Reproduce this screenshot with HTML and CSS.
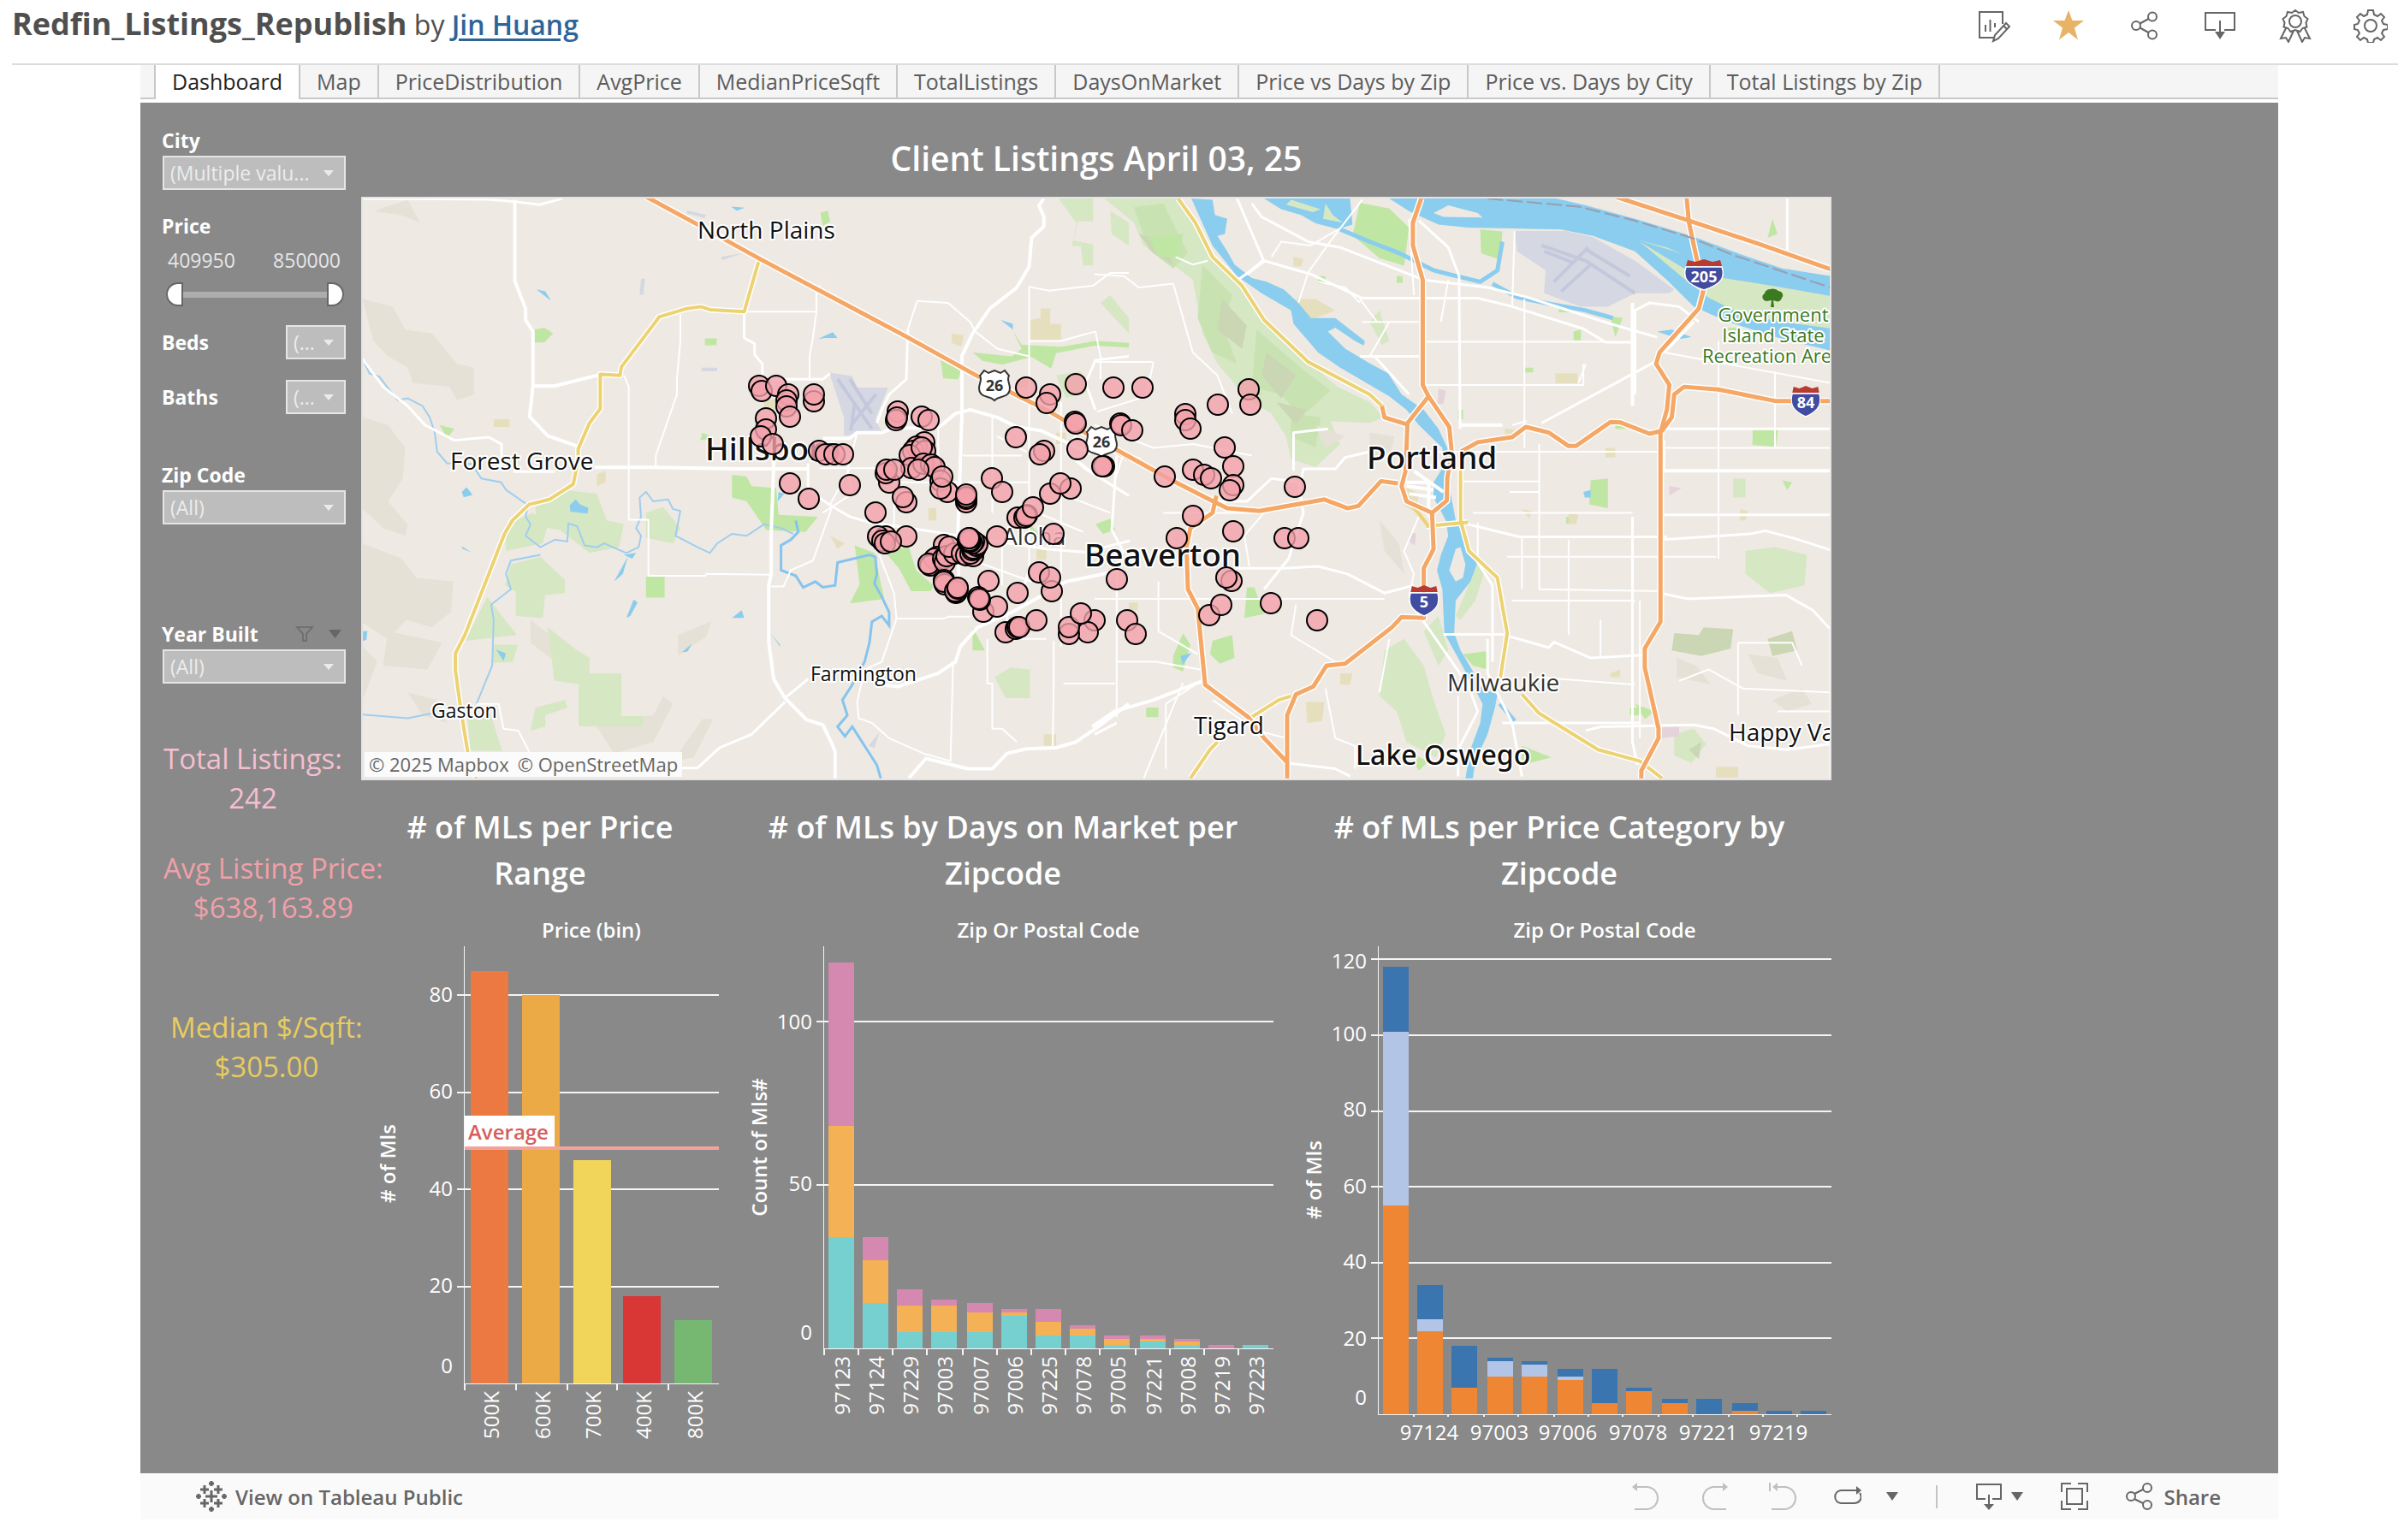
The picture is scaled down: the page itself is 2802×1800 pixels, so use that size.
FILE: index.html
```
<!DOCTYPE html>
<html lang="en">
<head>
<meta charset="utf-8">
<meta name="viewport" content="width=device-width, initial-scale=1">
<title>Redfin_Listings_Republish</title>
<link rel="stylesheet" href="styles.css">
</head>
<body>
<header class="topbar">
  <h1 class="viz-title"><strong>Redfin_Listings_Republish</strong> <span class="by">by</span> <a href="#author">Jin Huang</a></h1>
  <div class="actions">
    <button type="button" class="icon-btn" aria-label="Edit"><svg viewBox="0 0 40 40"><path d="M21 34H3V4h27v14M3 34V4M10 27v-8M15.500 27V13M21 22v-5M19 38l2-7 13-14 4 4-13 14-6 3zM31 20l4 4"/></svg></button>
    <button type="button" class="icon-btn" aria-label="Favorite"><svg viewBox="0 0 40 40"><path class="star" d="M19 2l4.500 12H37L26 22.500l4 14L19 28 8 36.500l4-14L1 14h13.500z"/></svg></button>
    <button type="button" class="icon-btn" aria-label="Share"><svg viewBox="0 0 40 40"><circle cx="10" cy="20" r="5"/><circle cx="29" cy="9.500" r="5"/><circle cx="29" cy="30.500" r="5"/><path d="M14.500 17.500l10-5.500M14.500 22.500l10 5.500"/></svg></button>
    <button type="button" class="icon-btn" aria-label="Download"><svg viewBox="0 0 40 40"><path d="M15 25H3V5h34v20H25M20 14v16"/><path class="solid" d="M14 27h12l-6 9z"/></svg></button>
    <button type="button" class="icon-btn" aria-label="Nominate"><svg viewBox="0 0 40 40"><circle cx="20" cy="15" r="7"/><path d="M20 2l4 3 5-1 1.500 5 4 3-2 4.500 1 5-5 1.500-3 4-5.500-2-5.500 2-3-4-5-1.500 1-5-2-4.500 4-3L11 4l5 1zM9 23L3 35l6-1 3 5 6-13M31 23l6 12-6-1-3 5-6-13"/></svg></button>
    <button type="button" class="icon-btn" aria-label="Settings"><svg viewBox="0 0 40 40"><circle cx="20" cy="20" r="7"/><path d="M17 2h6l1 5 4 2 4-3 4 4-3 4 2 4 5 1v5l-5 1-2 4 3 4-4 4-4-3-4 2-1 4h-6l-1-4-4-2-4 3-4-4 3-4-2-4-4-1v-5l4-1 2-4-3-4 4-4 4 3 4-2z"/></svg></button>
  </div>
</header>

<main class="viz">
  <nav class="tabs" aria-label="Sheets">
    <a class="tab current" href="#dashboard">Dashboard</a>
    <a class="tab" href="#map">Map</a>
    <a class="tab" href="#pricedistribution">PriceDistribution</a>
    <a class="tab" href="#avgprice">AvgPrice</a>
    <a class="tab" href="#medianpricesqft">MedianPriceSqft</a>
    <a class="tab" href="#totallistings">TotalListings</a>
    <a class="tab" href="#daysonmarket">DaysOnMarket</a>
    <a class="tab" href="#price-days-zip">Price vs Days by Zip</a>
    <a class="tab" href="#price-days-city">Price vs. Days by City</a>
    <a class="tab" href="#listings-zip">Total Listings by Zip</a>
  </nav>

  <div class="dashboard">
    <aside class="sidebar">
      <div class="filter">
        <label for="city">City</label>
        <span class="drop"><select id="city"><option>(Multiple valu...</option></select></span>
      </div>
      <div class="filter price">
        <span class="name" id="price">Price</span>
        <div class="range-values"><span>409950</span><span>850000</span></div>
        <div class="range" role="group" aria-labelledby="price">
          <input class="low" type="range" aria-label="Lowest price" min="409950" max="850000" value="409950">
          <input class="high" type="range" aria-label="Highest price" min="409950" max="850000" value="850000">
        </div>
      </div>
      <div class="filter inline beds">
        <label for="beds">Beds</label>
        <span class="drop"><select id="beds"><option>(...</option></select></span>
      </div>
      <div class="filter inline baths">
        <label for="baths">Baths</label>
        <span class="drop"><select id="baths"><option>(...</option></select></span>
      </div>
      <div class="filter zip">
        <label for="zip">Zip Code</label>
        <span class="drop"><select id="zip"><option>(All)</option></select></span>
      </div>
      <div class="filter year">
        <div class="filter-head">
          <label for="year">Year Built</label>
          <svg class="funnel" viewBox="0 0 56 20"><path class="line" d="M3 2h18l-7 8v8h-4v-8z"/><path class="caret" d="M40 5h15l-7.500 10z"/></svg>
        </div>
        <span class="drop"><select id="year"><option>(All)</option></select></span>
      </div>
      <p class="kpi total">Total Listings:<br>242</p>
      <p class="kpi avg">Avg Listing Price:<br>$638,163.89</p>
      <p class="kpi median">Median $/Sqft:<br>$305.00</p>
    </aside>

    <div class="content">
      <h2 class="dash-title">Client Listings April 03, 25</h2>
      <div class="map">
        <svg viewBox="425 232 1714 678" role="img" aria-label="Map of client listings">
          <defs>
            <symbol id="us" viewBox="0 0 38 36" overflow="visible"><path d="M7 1l5 3 7-3 7 3 5-3 5 6c-3 5 1 9 1 15 0 7-5 9-10 10-4 1-6 2-8 4-2-2-4-3-8-4C6 31 1 29 1 22 1 16 5 12 2 7z" fill="#fff" stroke="#333" stroke-width="2"/></symbol>
            <symbol id="inter" viewBox="0 0 48 36" preserveAspectRatio="none" overflow="visible"><path d="M3 9h42c4 12 0 20-21 27C3 29-1 21 3 9z" fill="#414b9f" stroke="#fff" stroke-width="1.500"/><path d="M3 8L5 1l9 2 10-3 10 3 9-2 2 7z" fill="#b93a32"/></symbol>
          </defs>
          <rect x="423" y="230" width="1718" height="682" fill="#eee9e3"/>

          <g class="geo" transform="translate(420 220) scale(.574 .4464)">
            <path class="hill" d="M8 290L70 310 95 370 150 380 200 460 235 470 235 540 200 555 185 520 110 510 100 470 60 440 30 400zM8 600L60 620 95 680 90 760 60 820 100 880 95 910 50 890 8 840zM30 60l70-30 25 60-40-20zM8 930l80 40 30 50 75 10-5 80-40 40-50-20-40 50-58-50zM60 1160l110 30-30 70-90-10zM8 1200l30 40-30 100zM100 1320l60 20 20 60-50-20zM350 1130l90 90 30 50-60-20-60-60zM480 1400l120-20 20-50 20 20-40 100-80 30zM650 1170l68-36-10 40-58 50zM640 1500l60-110 22 0 -40 100z"/>
            <path class="park pale" d="M300 880l55-30 30 30-10 50-75 20zM360 835l60-45 65 10 20 70 35 10-10 60-60 15-60-60-48-10zM310 985l60-20 50 60 0 35-80 10-42-30zM320 1050l60 10-5 65-55-5zM262 1070l60 100-105 15zM272 1195h52l-10 45-42 3zM385 1150l60 60 25 20v40h65v112h44v27H448v-110l-50-10-5-60zM360 1360l60-20 5 20-45 20 0 30-30 10zM222 1390l45-20 25 103h-64zM585 850l35-15 35 55-15 40-55-15zM1295 1280l32-25 40 5v75h-50zM1420 490l50-10 20 50-50 20z"/>
            <path class="park" d="M358 370l20-5 18 15-18 24h-20zM705 393h24v18h-24zM585 1017h38v55h-38zM760 750l30 5 10 25 50 5 5 70 80 5-25 40-80-5-40-75-30-10zM1010 935l40 20 20 120-70 12 20-50zM1070 950l50-10 15 60 35 40-5 15h-40l-25-60zM1185 450l45 20-10 30-30-2zM1250 430l80 10 20-20-20-50 20 40 80 5 70-15 68 5v12l-68-5-80 20-10 40-40-30-60 20-40-10zM1250 1150l25 60h-25zM940 65l15-7 5 30-15 10zM1410 370l15 5v22h-18zM1355 860l40 60-20 5zM1500 880l30-15 10 30-25 10zM700 640l25 15-30 5zM165 620l30 10-15 25z"/>
            <path class="park pale" d="M1425 27h70v60h-30l-10 50 40 10v55h-20l-5-50h-18l10-60zM1530 60l38 30v60l-35-30zM1510 300l20-20 38 60v40z"/>
            <path class="sand" d="M275 605h32v20h-32zM1368 345l20-5v-25h20v40h22v44h-62zM1207 380l25 5-5 30-20-10zM485 750l18-10v30l-18 10zM1160 838h16v32h-16zM960 910l30 20-15 15zM1395 1430h25v30h-25zM1380 940l20 5v28h-20zM1420 640h20v30h-20zM1345 500h18v20h-18zM825 560l25-10v30h-25z"/>
            <path class="air" d="M958 482L1005 492 1015 522 1078 522 1052 605 1065 638 988 648 988 600zM670 58l38 12-4 8-36-12zM738 180l45-10-43 18zM575 237h8l-3 42h-8zM698 470h32v9h-32zM1038 1460l22-35-10 40z"/>
            <path class="runway" d="M975 500l70 130M1000 500l45 90M1003 620l50-80M1010 560l-8 75"/>
            <path class="lake" d="M362 265l18 5 12 25zM935 395l30-18 10 15-25 0zM1307 345l25 10v15zM210 795l10-12 12 20-18 6zM430 830l12-15 8 12 18 10-2 15-35-5zM520 1030l28-65-10 45zM545 1125l15-48 8 8-15 35zM760 1125l20-20 5 20zM838 1165l20 30v5zM658 1215l20-22-8 20zM280 1208l20 10-5 20zM210 938l20 15-18-8zM855 795l12 5-14 20zM758 48l28 3-16 8zM540 960l25-5-8 15zM8 1160h10l-2 22-8 4z"/>
            <path class="stream" d="M10 450l12 35 20 8 28 47 10 15 20-5 30 20 15 30 10 40 5 50 20 30 50 2 20 38 40 10 10 20 45 40-5 30 10 20-10 30 30 30 30-20 25 5 2-47 18 7 15 50 25 5 15-10 45 25 25-15 5-30-10-20 10-30-3-50 13-15 15 25 30-5 10 25 15 5-10 65 45 30 25 15 15-25 30-25 30 5 35-30 35 10 25 15M370 960l-60 15-10 35 10 40-40 40 5 40-3 120-32 100M8 1378l92 10 50-13"/>
            <path class="stream wide" d="M890 870l5 30-15 20-20 15v65l30 15 15 30 25-15 15 15 25-5 5-60 65-20 12 5 3 45-5 25 15 35 15 40v35l-15-25-20 15-5 55-10 50-25 60-20 40 10 40-20 30 15 25 15-25 25 50 25 50 8 35"/>
            <path class="road thin" d="M655 330v70l-7 100v40l-43 160v30M785 323h147v-48l8-20M932 325l-7 65-7 50v60M1137 295l63 5 45 50 10 25 45 45 65 20M1137 295l-19 75M1365 258v750M1365 258l40 10 90-13 35-33h38M1365 400h65l70-25 10 65v60M540 490l10 30v348h40v147h115l3-5 132 2M965 830l-40 145-45 25-15 43h-25M1060 960l30 100 5 67h95l10-5h45M1095 1127l-30 113-35 20-15 85 3 43 27 12 35 40 70 40 55 20 5-250M1280 1180v117h10v118h20l30 35M1415 1185v112l-2 163M1435 1297h105M940 733h120M1080 770h140M1310 940v100M1015 640l-20 100 10 60-60 50M1240 770h125M1290 600v250M1430 560v640M1365 840l110 60M1480 600l-40 90 60 60M1240 970l130 60M1230 700h120M1300 650l60 40M1320 1110v70h80M1180 628v130M1090 770v120M1000 733l-40 95M240 1350h45l10 65 30 5 22 55M1390 780l140 70"/>
            <path class="road" d="M8 27l252 2 58 6 50 8 47-16M8 447l42 73 50 50 35 50 60 40 70-8 26 18v70M315 742h85M785 323v69l21 15v28l16 25v40h123l15-15M868 1345l-68 85-65 35-45 53h-40M915 720v70l45 40 40 30 40 15 160 30 200 40 80 8 90-30M1118 370l-3 130-35 40-15 40-10 35M868 1335l47-50M1568 440l-68 10-20 60 20 70M1440 690l40 45 88 70M1365 1000l-10 40"/>
            <path class="road big" d="M318 30v213l22 72v30l15 30v143h43l94-30M355 518l-7 80 37 50 62 28M480 731h120l170 4h145M847 655l-7 245v110l-5 30v150l10 95 23 50 44 57 33 13 17 45 8 25v70M945 655h55l15-15h50l25-12h90l35-38 30-10 55 20 40 25 50 10 100 60M1395 27l-10 18 10 30v25l-25 30-5 75-25 55-55 55-35 65-22 60v160l-8 300 2 160M1060 1300l38 5 82-35 35-30 10-40 35-50 70-40 70-50 40-30 58-15 52-15M1120 1545l35-52 85 27h50l30-40 40-12 60-3 40-15 40-35 68-65"/>
            <path class="yellow-case" d="M817 180L785 323l-70-5-18-8-32 6-53 21-77 131-3 22-40-3v90l-22 38-23 68v29l-10 63-49 40-41 13-34 42-16 35-80 263-20 50v44l10 93 15 120 18 70"/>
            <path class="yellow" d="M817 180L785 323l-70-5-18-8-32 6-53 21-77 131-3 22-40-3v90l-22 38-23 68v29l-10 63-49 40-41 13-34 42-16 35-80 263-20 50v44l10 93 15 120 18 70"/>
            <path class="freeway-case" d="M585 22L690 95l127 90 293 200 150 107 140 88 168 128"/>
            <path class="freeway" d="M585 22L690 95l127 90 293 200 150 107 140 88 168 128"/>
          </g>

          <g class="geo" transform="translate(1280 220) scale(.574 .4464)">
            <path class="park pale" d="M20 27h150l70 153 60 80 45 85 90 110 60 65 65 40 28 40-28 15-80-5 20 60-50 60-50-20-10-60-30-60-50-40-60-90-30-80-20-140-60-60-40-30-20-60z"/>
            <path class="forest" d="M80 50l60-10 50 130-30 40-50-50zM220 200l60 80-20 80 30 100-50-30-30-90zM330 370l80 90 70 70-60 70-40-60-60-20zM400 590l60 10-10 80-50-30z"/>
            <path class="hillgreen" d="M90 120l50 20 20 60-40-30zM260 290l50 70-10 60-50-50zM350 430l60 60-30 60-40-60zM370 560l60 20-20 40z"/>
            <path class="park" d="M540 38l60 15 40 50-10 100-50-20-55-60zM785 108l45 5-3 75-40-18zM110 130l70-10-10 60-40 0zM1010 765l35-5v78l-38-10zM1340 632l52-5-5 50-48-5zM310 1045l15 0 20 70-40 10zM240 1185l40-15 5 60-30 15-20-25zM160 1225l20-60 15 30-15 70-20-10zM735 950l10 30-10 40zM750 1220l50-8v48l-30-10zM1100 1350l40 20-20 20zM615 230h12v18h-12zM945 310h28v15h-28zM1050 335l25 5-15 50zM975 375l15-5v28h-15zM1290 365h20v25h-20zM875 470h18v12h-18zM1060 620l20-10v20h-20zM740 580h10v25h-10zM1380 80l10 40-20 10zM1090 1360h22v20h-22zM320 510l20 30-20 5zM455 230h15v20h-15zM870 1460l60 30-60 20zM105 1360h25v25h-25zM960 860h16v18h-16zM640 1480l40 20-20 25zM1400 765l20 5-10 20z"/>
            <path class="park pale" d="M590 1210l40-30 40 70 20 90 25 90-20 60-60-40-20-80-35-40zM670 1160l30-40 20 90-20 40zM1325 950l60-10 65 20-5 80-70 20-50-50zM1180 1430l40-15 25 40-30 50-35-20zM780 970l15 30-20 80-30 50-10-10 20-60zM1300 760h25v50h-25zM560 350l20-30 20 80-15 10z"/>
            <path class="hillgreen" d="M1180 1165l50 5 10-20 60 5-5 50-60 20-60-15zM1370 1180l50-20 10 50-50 15zM1210 1470l25-20-5 45z"/>
            <path class="hill" d="M1185 1230l40 20 30 50-70-20zM1330 1220l60 10 20 60-60-20zM560 640l50 10-10 60-40-10zM580 870l40 60 10 80-40-60zM450 620l60 30-40 30zM1380 1340l60-30 20 40-50 20z"/>
            <path class="sand" d="M410 290l40 0 40 30-50 25zM938 485h45v25h-45zM430 1345h38l-5 50-30 5zM1265 1515h45v28h-45zM965 850l20 5-5 25h-15zM1315 840l15 5-5 25h-12zM835 630l20 2v25h-20zM500 1270l25 0-5 30h-20zM70 1085h18v20h-18zM1050 1270l20-10v20h-20zM1040 680h20v25h-20zM630 780l30 20-5 50-25-20zM405 180l20 5-5 20h-15zM870 840l20 5-5 20z"/>
            <path class="rose" d="M700 525l15 5-5 35h-12zM643 900l12 5-3 30-12-10zM1170 780l25 5-25 20zM1155 1410h35v25l-35 5z"/>
            <path class="air" d="M855 112h105l55 16 85 62 80 75-10 10h-70l-55 35h-55l-75-35 3-60-58-50z"/>
            <path class="runway" d="M910 150l90 40 100 85M935 245l70-90M1000 160l90 70M915 165l60 30M950 270l60-70"/>
            <path class="lake" d="M197 27L240 30 245 70 270 80 265 120 250 125 270 165 285 200 320 235 350 245 385 265 415 300 440 340 490 340 550 400 548 412 530 400 490 365 475 375 510 420 555 455 598 485 625 540 670 580 700 630 718 680 722 780 735 870 752 910 778 985 765 1030 735 1080 732 1165 745 1210 768 1260 790 1310 820 1325 815 1360 800 1430 775 1500 770 1545H755L765 1470 785 1400 790 1350 765 1290 740 1230 712 1165 708 1050 697 1000 705 960 720 910 715 870 690 810 690 770 710 730 708 680 660 620 635 580 600 545 500 470 455 430 405 355 400 320 340 275 290 230 240 150z"/>
            <path class="lake" d="M600 27L640 60 700 95 760 103 950 108 1015 125 1100 165 1165 240 1220 310 1290 350 1400 395 1498 425V230L1400 210 1330 180 1215 125 1100 80 1000 45 940 27z"/>
            <path class="lake" d="M345 27H520l5 68-30 12-45-15-30-22-40-15zM1145 375l30-5 40 20-25 5zM995 795l15-5v20h-12zM175 1225l22-8-18 30z"/>
            <path class="park pale" d="M1105 135l60 20 35 20-20-10zM1110 140l90 70 80 25 120 25 98 22v85l-98-17-80-18-70-45-50-50z"/>
            <path class="park pale" d="M400 30l60 25-15 8-55-20zM470 40l15 30 20 20-40-10z"/>
            <path fill="#eee9e3" d="M690 65l30-20 60 20 10 12-80-2zM735 945l10-5 10 45-5 35-15 10-13-30z"/>
            <path class="slough" d="M495 105l65 35 60 30 70 45 30 10 65 20 35-30 10-75M810 250l50 35 55 15 85 20 55 20M825 1350l30 45"/>
            <path class="road thin" d="M0 225l60 5 30 30 70-10M0 455h118M165 180l35 20 30-10M670 402h375M670 515h325V460M875 290v390M668 690h480M875 400v160M905 670v380l250 5M740 768h165M770 850h325M840 965h425M1270 400v570M1385 480v200M1160 680h338M1160 740v-80M780 875v90M870 910v140M965 920v250M850 620l30-10M0 1075h590M45 1000v385M130 1030v130l80 60M45 1240h80l90 20M145 1520V1350l60-50M540 300l-30-40-55-15M360 180l20-40 60 10 60-45M905 795h-60M1095 300v250M1160 430l338 80M1110 1080v360M1310 1190v190M1190 1290l60-30 70 50 178 10M1310 1190h110l20 60M345 850l-40 60 10 80M120 455l-15 90-100 40M160 250l40 180 50 60 30 100M0 620l120 60 80-10 120 30M410 1090l-10 80 90 70M545 350h70l45 0M540 290l35 60M660 860l-30 90 20 60-10 60M470 1310l20 130 40 20v60M390 1440l-60-20-90-80M140 850h180M60 690l-20 80M545 30l-60 100-50 90-20 80M855 112l-5 200M640 80l10 200M720 240l-15 110M560 440l40-90M1000 460l-15 50M900 1280l200 20M1030 1130v100M600 1180l-20 140M100 1545l80-250M1390 1370h108M850 1080h250M740 1330v200"/>
            <path class="road" d="M290 27l30 90 25 75-50 45M320 40l20 35 95 65 65 15 170 85 130 20 80 25 170 70 95 35M345 190l95 35 105 63h235l65 20 150 60 45 35h60M660 85l60 70 22 75 2 400M745 620h85M910 615l230-160 10-30M1152 740h346M1152 855h346M1155 920l180-15 30-8 60 20 73 30M760 880l105 33h300M1150 630h348M1100 540V320l30-20 60 10 40 40M285 995h100l70-5 60 20 75 50 60-20M710 1168h120l95 35 10-15 75 42 115-8M1152 1060l55 15 200-10 55 40 36 50v390M390 1505l100 15 30 20M830 1400h280M1000 1420l30-10 190-5 40 10 70 45 80 10 88-15M50 690l45 20M45 700l-10 195 25 60M45 1400l-45 30M250 820l60 0 50-60 60 10 5-35 65 0 20-30 50-15M475 630l-70 10 0 100M1410 27v135M1160 430l60-80M415 770l10 80-30 120-50 80M540 440h120M570 440l70 100M640 1080l60 110 60 110 20 70-40 100v70M800 1180v90l50 130 20 140M1095 860v590l10 60M780 980l30 60v200"/>
            <path class="road big" d="M1160 740h338M1095 300v270M745 620h85M630 770l50 0 0 90M635 780l55 10M640 800l55 10M220 1290l-100 50-80 30-45 40M650 740l60 55M310 225l33-35"/>
            <path class="yellow-case" d="M170 27l35 63 35 90 60 75 45 90 90 110 125 85 25 30M745 730v140l17 80 58 70 20 145-15 125M870 1325l35 50 120 95 85 30 45 45M675 885l85-10M400 1330l-25 10-62 50M250 1450l-15 20-40 75"/>
            <path class="yellow" d="M170 27l35 63 35 90 60 75 45 90 90 110 125 85 25 30M745 730v140l17 80 58 70 20 145-15 125M870 1325l35 50 120 95 85 30 45 45M675 885l85-10M400 1330l-25 10-62 50M250 1450l-15 20-40 75M640 820l40 65"/>
            <path class="freeway-case" d="M0 650l45 35 105 75 95 62 25 16 65 7 133-30 47 23 22-6 46-65 34 6M585 570l5 30 45 18M665 27l-17 63v60l20 90v275l12 30 42 80 5 65-9 70-1 58-30 32 3 95-20 50v130l-45-2-20 27-95 95-38 5-27 55-35 20-18 55v165M680 545l-43 70-4 125-8 40 10 40 52 30M248 805l-8 45-45 40-8 50 3 110 20 50 15 200 88 85 32 55 47 63M745 690l35-25 70-13 28-27 47 15 40 35h15l70-63 20 1 60 30 25-8 20-35 5-60 20-20 70 7 115 30h113M1205 22l5 68 15 90 15 85-10 50-80 115-7 30 27 55-5 65-13 60v495l-32 70v50l28 160v25l-35 85v20M1060 22l150 63 140 60 148 67"/>
            <path class="freeway" d="M0 650l45 35 105 75 95 62 25 16 65 7 133-30 47 23 22-6 46-65 34 6M585 570l5 30 45 18M665 27l-17 63v60l20 90v275l12 30 42 80 5 65-9 70-1 58-30 32 3 95-20 50v130l-45-2-20 27-95 95-38 5-27 55-35 20-18 55v165M680 545l-43 70-4 125-8 40 10 40 52 30M248 805l-8 45-45 40-8 50 3 110 20 50 15 200 88 85 32 55 47 63M745 690l35-25 70-13 28-27 47 15 40 35h15l70-63 20 1 60 30 25-8 20-35 5-60 20-20 70 7 115 30h113M1205 22l5 68 15 90 15 85-10 50-80 115-7 30 27 55-5 65-13 60v495l-32 70v50l28 160v25l-35 85v20M1060 22l150 63 140 60 148 67"/>
            <path class="state" d="M800 27l185 21 115 37 115 45 85 45 198 85"/>
          </g>

          <g class="places">
            <text class="t28" x="816" y="279">North Plains</text>
            <text class="t28" x="527" y="549">Forest Grove</text>
            <text class="t36" x="825" y="538">Hillsboro</text>
            <text class="t24" x="505" y="839">Gaston</text>
            <text class="t24" x="948" y="796">Farmington</text>
            <text class="t28 soft" x="1172" y="637">Aloha</text>
            <text class="t36" x="1268" y="662">Beaverton</text>
            <text class="t36" x="1598" y="548">Portland</text>
            <text class="t28 soft" x="1692" y="808">Milwaukie</text>
            <text class="t28" x="1396" y="858">Tigard</text>
            <text class="t32" x="1585" y="894">Lake Oswego</text>
            <text class="t28" x="2021" y="866">Happy Va</text>
            <g class="green">
              <text x="2073" y="376" text-anchor="middle">Government</text>
              <text x="2073" y="400" text-anchor="middle">Island State</text>
              <text x="1990" y="424">Recreation Are</text>
            </g>
          </g>
          <path fill="#3c7a22" d="M2070 359l1-8-6 1a6 5 0 01-2-9 7 5 0 016-5 8 5 0 0110 2 6 5 0 014 8 5 5 0 01-7 4l-3-1 1 8z"/>
          <use href="#us" x="1144" y="432" width="38" height="36"/>
          <use href="#us" x="1269" y="498" width="38" height="36"/>
          <use href="#inter" x="1968" y="303" width="48" height="36"/>
          <use href="#inter" x="2093" y="451" width="36" height="36"/>
          <use href="#inter" x="1647" y="684" width="36" height="36"/>
          <g class="shield-text">
            <text x="1163" y="457" fill="#333">26</text><text x="1288" y="523" fill="#333">26</text>
            <text x="1992" y="330">205</text><text x="2111" y="477">84</text><text x="1665" y="710">5</text>
          </g>
          <g id="pins"></g>
        </svg>
        <p class="credit"><a href="#mapbox">© 2025 Mapbox</a> <a href="#osm">© OpenStreetMap</a></p>
      </div>
      <div class="charts">
        <section class="chart"><h3># of MLs per Price Range</h3><svg id="chart-price" viewBox="423 1048 418 652" role="img" aria-label="Listings per price bin"></svg></section>
        <section class="chart"><h3># of MLs by Days on Market per Zipcode</h3><svg id="chart-days" viewBox="857 1048 632 652" role="img" aria-label="Listings by days on market"></svg></section>
        <section class="chart"><h3># of MLs per Price Category by Zipcode</h3><svg id="chart-category" viewBox="1505 1048 636 652" role="img" aria-label="Listings by price category"></svg></section>
      </div>
    </div>
  </div>

  <footer class="toolbar">
    <a class="public" href="#public"><svg viewBox="0 0 36 36"><path d="M18 11v14M11 18h14M10 5v10M5 10h10M26 5v10M21 10h10M10 21v10M5 26h10M26 21v10M21 26h10M18 0v6M15 3h6M18 30v6M15 33h6M3 15v6M0 18h6M33 15v6M30 18h6"/></svg>View on Tableau Public</a>
    <div class="tools">
      <div class="history">
        <button type="button" class="tool faded" aria-label="Undo"><svg viewBox="0 0 32 32"><path d="M3 5h15c16 2 16 24 0 26H3"/><path class="solid" d="M0 5l6-5v10z"/></svg></button>
        <button type="button" class="tool faded" aria-label="Redo"><svg viewBox="0 0 32 32"><path d="M29 5H15C-1 7-1 29 15 31h15"/><path class="solid" d="M32 5l-6-5v10z"/></svg></button>
        <button type="button" class="tool faded" aria-label="Revert"><svg viewBox="0 0 32 32"><path d="M7 5h12c16 2 16 24 0 26H3M1 0v10"/><path class="solid" d="M4 5l6-5v10z"/></svg></button>
      </div>
      <div class="replay">
        <button type="button" class="tool" aria-label="Replay"><svg viewBox="0 0 32 32"><path d="M28 9H8C-1 10-1 23 8 24h16c8-1 9-8 6-12"/><path class="solid" d="M32 9l-6-5v10z"/></svg></button>
        <button type="button" class="tool caret" aria-label="Replay speed"><svg viewBox="0 0 14 12"><path class="solid" d="M0 1h14L7 11z"/></svg></button>
      </div>
      <span class="divider"></span>
      <div class="save">
        <button type="button" class="tool" aria-label="Download"><svg viewBox="0 0 32 32"><path d="M12 19H2V2h28v17H20M16 14v14"/><path class="solid" d="M10 25h12l-6 7z"/></svg></button>
        <button type="button" class="tool caret" aria-label="Download options"><svg viewBox="0 0 14 12"><path class="solid" d="M0 1h14L7 11z"/></svg></button>
      </div>
      <button type="button" class="tool" aria-label="Full screen"><svg viewBox="0 0 32 32"><path d="M1 11V1h11M20 1h11v10M31 21v10H20M12 31H1V21M7 7h18v18H7z"/></svg></button>
      <button type="button" class="tool share"><svg viewBox="0 0 32 32"><circle cx="6" cy="16" r="5"/><circle cx="25" cy="6" r="5"/><circle cx="25" cy="26" r="5"/><path d="M10 13l10-5M10 19l10 5"/></svg>Share</button>
    </div>
  </footer>
</main>
<script src="script.js"></script>
</body>
</html>
```
FILE: styles.css
```
* { box-sizing: border-box; }
body { margin: 0; background: #fff; color: #555; font-family: "Open Sans", "Noto Sans", sans-serif; font-size: 24px; }
h1, h2, h3, p { margin: 0; }
button { padding: 0; border: 0; background: none; font: inherit; color: inherit; }
svg { display: block; }

.topbar { display: flex; justify-content: space-between; height: 76px; margin-left: 14px; padding: 6px 12px 0 0; border-bottom: 2px solid #dcdcdc; }
.viz-title { font-size: 32px; line-height: 44px; font-weight: 400; color: #4f4f4f; }
.viz-title strong { font-size: 36px; font-weight: 700; }
.viz-title a { color: #2f6499; font-weight: 600; text-underline-offset: 4px; }
.actions { display: flex; gap: 48px; padding-top: 4px; }
.icon-btn { width: 40px; height: 40px; }
.icon-btn path, .icon-btn circle, .tool path, .tool circle, .public path { fill: none; stroke: #666; stroke-width: 2; }
.icon-btn .solid, .tool .solid { fill: #666; stroke: none; }
.icon-btn .star { fill: #e8b365; stroke: none; }

.viz { max-width: 2498px; margin: 0 auto; position: relative; left: 12px; }
.tabs { display: flex; height: 44px; padding-left: 16px; background: linear-gradient(#f5f5f5 38px, #c8c8c8 38px, #c8c8c8 40px, #fff 40px); }
.tab { height: 38px; padding: 0 19px; border-right: 2px solid #c8c8c8; font-size: 25px; line-height: 38px; color: #5c5c5c; text-decoration: none; white-space: nowrap; }
.tab.current { height: 40px; border-left: 2px solid #c8c8c8; background: #fff; color: #222; }

.dashboard { display: grid; grid-template-columns: minmax(0, 258fr) minmax(0, 1718fr) minmax(0, 522fr); background: #898989; color: #fff; }
.sidebar { padding: 28px 17px 0 25px; }
.filter label, .filter .name { display: block; font-weight: 700; font-size: 23px; line-height: 32px; }
.drop { display: block; position: relative; margin: 2px 1px 0; }
.drop::after { content: ""; position: absolute; right: 14px; top: 17px; border: 6px solid transparent; border-top: 7px solid #ebebeb; border-bottom: 0; pointer-events: none; }
.drop select { appearance: none; display: block; width: 100%; height: 40px; margin: 0; padding: 0 0 0 7px; border: 2px solid #e5e5e5; border-radius: 0; background: #bdbdbd; color: #ececec; font: 400 23px/34px "Open Sans", sans-serif; }
.price { margin-top: 26px; }
.range-values { display: flex; justify-content: space-between; margin-top: 8px; padding: 0 7px; font-size: 23px; line-height: 32px; color: #e6e6e6; }
.range { position: relative; height: 28px; margin: 10px 3px 0 5px; background: linear-gradient(#adadad, #adadad) center / 100% 7px no-repeat; }
.range input { appearance: none; position: absolute; inset: 0; width: 100%; height: 28px; margin: 0; background: none; pointer-events: none; }
.range input::-webkit-slider-thumb { appearance: none; width: 20px; height: 28px; border: 2px solid #666; background: #fff; pointer-events: auto; }
.range .low::-webkit-slider-thumb { border-radius: 14px 0 0 14px; }
.range .high::-webkit-slider-thumb { border-radius: 0 14px 14px 0; }
.inline { display: flex; justify-content: space-between; align-items: center; height: 40px; }
.inline .drop { width: 70px; margin-top: 0; }
.beds { margin-top: 22px; }
.baths { margin-top: 24px; }
.zip { margin-top: 55px; }
.year { margin-top: 112px; }
.filter-head { display: flex; justify-content: space-between; align-items: center; }
.funnel { width: 56px; height: 20px; margin-right: 5px; }
.funnel .line { fill: none; stroke: #707070; stroke-width: 2; }
.funnel .caret { fill: #666; }
.kpi { width: max-content; margin-left: 2px; font-size: 33px; line-height: 46px; font-weight: 400; text-align: center; }
.total { margin-top: 65px; color: #f5bfd2; }
.avg { margin-top: 36px; color: #f0a0a8; }
.median { margin: 94px 0 0 10px; color: #e8cc60; }

.dash-title { padding: 38px 0 18px; font-size: 39px; line-height: 54px; font-weight: 600; text-align: center; }
.map { position: relative; border: 2px solid #e5e5e5; overflow: hidden; }
.map svg { width: 100%; height: auto; }
.credit { position: absolute; left: 2px; bottom: 2px; display: flex; gap: 10px; padding: 0 5px; background: #fbfbfb; font-size: 22px; line-height: 29px; }
.credit a { color: #666; text-decoration: none; }
.geo path { vector-effect: non-scaling-stroke; }
.hill { fill: #e6e1d6; }
.park { fill: #c0e6a4; }
.pale { fill: #d6e7c3; }
.forest { fill: #c9e2b2; }
.hillgreen { fill: #cbd6b4; }
.sand { fill: #e6dfbe; }
.rose { fill: #e5d3dc; }
.air { fill: #d5d8e2; }
.runway { fill: none; stroke: #c5c8dc; stroke-width: 4; }
.lake { fill: #8acdee; }
.stream { fill: none; stroke: #a0ceee; stroke-width: 2; }
.stream.wide { stroke: #85c4ee; stroke-width: 3; }
.slough { fill: none; stroke: #8acdee; stroke-width: 5; }
.road { fill: none; stroke: #fff; stroke-width: 3; stroke-linejoin: round; }
.road.thin { stroke-width: 2; }
.road.big { stroke-width: 4; }
.yellow, .yellow-case, .freeway, .freeway-case { fill: none; stroke-linejoin: round; }
.yellow { stroke: #edd272; stroke-width: 4; }
.yellow-case { stroke: #fff; stroke-width: 7; }
.freeway { stroke: #f5a766; stroke-width: 5; }
.freeway-case { stroke: #fff; stroke-width: 8; }
.state { fill: none; stroke: #9a9db0; stroke-width: 2; stroke-dasharray: 18 5; }
.places text { fill: #111; stroke: #fff; stroke-width: 4; stroke-linejoin: round; paint-order: stroke; }
.places .green text { fill: #3c7a22; font-size: 22px; }
.places .soft { fill: #333; }
.t24 { font-size: 23px; }
.t28 { font-size: 28px; }
.t32 { font-family: "Noto Sans", sans-serif; font-size: 32px; font-weight: 500; }
.t36 { font-family: "Noto Sans", sans-serif; font-size: 37px; font-weight: 500; }
.shield-text text { fill: #fff; font-size: 18px; font-weight: 700; text-anchor: middle; }
.shield-text text[fill] { fill: #333; }
#pins circle { fill: #f2a0aa; fill-opacity: .8; stroke: #000; stroke-width: 2; }

.charts { display: grid; grid-template-columns: 418fr 632fr 636fr; gap: 16px; padding: 28px 0 22px; }
.chart h3 { font-size: 36px; line-height: 54px; font-weight: 600; text-align: center; }
.chart svg { width: 100%; height: auto; }
.chart text { fill: #fff; font-size: 24px; }
.chart .head { font-weight: 600; text-anchor: middle; }
.chart .avg-label { fill: #d65f5b; font-weight: 600; }

.toolbar { display: flex; justify-content: space-between; height: 54px; padding: 0 67px 0 65px; background: #fafafa; color: #666; font-weight: 600; }
.public { display: flex; align-items: center; gap: 10px; color: inherit; text-decoration: none; }
.public svg { width: 36px; height: 36px; }
.public path { stroke-width: 3; }
.tools, .history, .replay, .save, .share { display: flex; align-items: center; }
.tools { gap: 44px; }
.history { gap: 48px; }
.replay { gap: 29px; }
.save { gap: 10px; }
.tool svg { width: 32px; height: 32px; }
.tool.caret svg { width: 14px; height: 12px; }
.faded path { stroke: #c0c0c0; }
.faded .solid { fill: #c0c0c0; }
.divider { width: 2px; height: 27px; background: #c4c4c4; }
.share { gap: 12px; }
```
FILE: script.js
```
const NS = "http://www.w3.org/2000/svg";

function add(parent, tag, attrs, text) {
  const el = document.createElementNS(NS, tag);
  for (const key in attrs) el.setAttribute(key, attrs[key]);
  if (text !== undefined) el.textContent = text;
  parent.appendChild(el);
}

const listings = "82,92 90,110 127,92 157,122 152,143 152,165 161,202 222,148 222,122 100,206 100,247 87,271 118,296 236,320 252,332 275,332 296,332 161,435 209,489 313,440 379,537 435,182 431,212 433,205 496,202 514,212 504,292 484,305 475,320 505,320 466,335 497,308 470,380 500,365 520,370 530,378 488,386 413,433 405,400 408,386 426,386 545,425 562,465 545,452 548,410 458,500 449,483 610,500 610,490 610,482 610,474 675,416 701,465 736,272 762,98 824,122 814,152 888,86 984,98 1059,98 887,220 888,224 892,314 808,320 797,332 824,470 875,453 849,434 960,375 957,376 1001,224 1004,230 1032,248 740,555 758,555 765,545 762,550 779,518 1115,410 1167,193 1167,212 1180,242 1250,158 1328,104 1333,158 1267,308 1290,376 1188,386 1215,404 1232,416 1290,440 1281,458 1446,446 1188,548 1146,626 1290,603 1419,626 1455,626 1285,777 1272,765 1228,896 1259,860 1385,855 1502,914 993,771 1020,914 1041,962 937,914 919,957 871,963 871,938 901,890 710,957 736,945 741,940 745,938 788,914 740,818 828,813 796,746 823,765 667,777 654,884 688,866 640,835 645,843 643,840 832,613 688,620 405,620 386,620 457,620 397,635 403,645 418,638 553,650 535,693 530,700 518,722 515,718 550,700 555,710 560,690 580,680 567,656 553,775 556,788 553,780 583,820 585,815 582,812 588,805 588,802 600,680 610,686 628,690 620,680 625,670 632,665 628,662 635,655 638,648 630,640 625,645 620,640 615,640 615,632 618,635 618,628 617,626";
const pins = document.getElementById("pins");
for (const pair of listings.split(" ")) {
  const [a, b] = pair.split(",").map(Number);
  add(pins, "circle", { cx: Math.round(850 + a / 2.178), cy: Math.round(420 + b / 3), r: 12 });
}

function drawChart(id, c) {
  const svg = document.getElementById(id);
  const y = v => c.base - v * c.unit;
  const rule = (x, top, w, h) => add(svg, "rect", { x, y: Math.round(top), width: w, height: h, fill: "#f5f5f5" });
  for (const [v, baseline] of c.scale) {
    if (v) rule(c.left - 8, y(v) - 1, c.right - c.left + 8, 2);
    add(svg, "text", { x: c.left - 13, y: baseline, "text-anchor": "end" }, v);
  }
  c.bars.forEach((parts, i) => {
    let sum = 0;
    parts.forEach((v, k) => {
      const top = Math.round(y(sum + v)), bottom = Math.round(y(sum));
      const fill = c.colors.length === parts.length ? c.colors[k] : c.colors[i];
      if (v) add(svg, "rect", { x: c.xs[i], y: top, width: c.barWidth, height: bottom - top, fill });
      sum += v;
    });
  });
  rule(c.left, 1106, 1, c.base - 1106);
  rule(c.left, c.base, c.right - c.left, 1);
  c.ticks.forEach(x => rule(x, c.base, 2, c.tick));
  add(svg, "text", { class: "head", x: (c.left + c.right) / 2, y: 1096 }, c.head);
  add(svg, "text", { class: "head", transform: `translate(${c.title[0]} ${c.title[1]}) rotate(-90)` }, c.title[2]);
  c.labels.forEach(([x, name]) => add(svg, "text", c.upright
    ? { x, y: 1683, "text-anchor": "middle" }
    : { transform: `translate(${x} ${c.base + 9}) rotate(-90)`, "text-anchor": "end" }, name));
}

drawChart("chart-price", {
  left: 543, right: 841, base: 1617, unit: 5.675, barWidth: 44, tick: 8,
  scale: [[0, 1605], [20, 1511], [40, 1398], [60, 1284], [80, 1171]],
  xs: [551, 611, 671, 729, 789], bars: [[85], [80], [46], [18], [13]],
  colors: ["#ed7942", "#ecaa46", "#f1d45a", "#d93636", "#76b871"],
  ticks: [543, 603, 663, 721, 781], head: "Price (bin)", title: [463, 1360, "# of Mls"],
  labels: [[584, "500K"], [644, "600K"], [703, "700K"], [762, "400K"], [822, "800K"]]
});
const price = document.getElementById("chart-price");
add(price, "rect", { x: 544, y: 1304, width: 105, height: 36, fill: "#fff" });
add(price, "rect", { x: 544, y: 1340, width: 297, height: 4, fill: "#f3a39b" });
add(price, "text", { class: "avg-label", x: 548, y: 1332 }, "Average");

const zips = ["97123", "97124", "97229", "97003", "97007", "97006", "97225", "97078", "97005", "97221", "97008", "97219", "97223"];
const dayX = [969, 1009, 1049, 1089, 1131, 1171, 1211, 1251, 1291, 1333, 1373, 1413, 1453];
drawChart("chart-days", {
  left: 963, right: 1489, base: 1576, unit: 3.82, barWidth: 30, tick: 8,
  scale: [[0, 1566], [50, 1392], [100, 1203]], xs: dayX,
  bars: [[34, 34, 50], [14, 13, 7], [5, 8, 5], [5, 8, 2], [5, 6, 3], [10, 1, 1], [4, 4, 4], [4, 2, 1], [1, 2, 1], [2, 1, 1], [1, 1, 1], [0, 0, 1], [1, 0, 0]],
  colors: ["#76d0d0", "#f4b156", "#d588b0"], ticks: dayX.map(x => x - 6),
  head: "Zip Or Postal Code", title: [897, 1341, "Count of Mls#"],
  labels: zips.map((z, i) => [dayX[i] + 25, z])
});

const catX = [1617, 1657, 1697, 1739, 1779, 1821, 1861, 1901, 1943, 1983, 2025, 2065, 2105];
drawChart("chart-category", {
  left: 1611, right: 2141, base: 1653, unit: 4.43, barWidth: 30, tick: 3, upright: true,
  scale: [[0, 1642], [20, 1573], [40, 1483], [60, 1395], [80, 1305], [100, 1217], [120, 1132]], xs: catX,
  bars: [[55, 46, 17], [22, 3, 9], [7, 0, 11], [10, 4, 1], [10, 3, 1], [9, 1, 2], [3, 0, 9], [6, 0, 1], [3, 0, 1], [0, 0, 4], [1, 0, 2], [0, 0, 1], [0, 0, 1]],
  colors: ["#ef8633", "#b3c5e6", "#3a75af"], ticks: catX.slice(1).map(x => x - 5),
  head: "Zip Or Postal Code", title: [1545, 1379, "# of Mls"],
  labels: [[1671, "97124"], [1753, "97003"], [1833, "97006"], [1915, "97078"], [1997, "97221"], [2079, "97219"]]
});
```
